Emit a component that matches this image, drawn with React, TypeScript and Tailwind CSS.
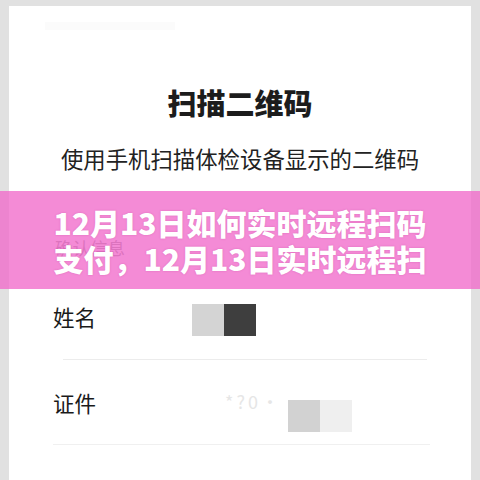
const cjk = { fontFamily: '"Noto Sans CJK SC", "Noto Sans", sans-serif' };

const App = () => {
  return (
    <div className="relative h-[480px] w-[480px] overflow-hidden bg-[#e1e1e1] px-[9px] pt-[6px]" style={cjk}>
      {/* Card */}
      <div className="flex h-full flex-col bg-white">
        <div className="ml-[36px] mt-[16px] h-[8px] w-[130px] bg-[#fbfbfb]" />
        <h1 className="mt-[52px] h-[40px] text-center text-[29px] font-black leading-[40px] text-[#1c1c1c]">
          扫描二维码
        </h1>
        <p className="mt-[21px] h-[30px] text-center text-[22.4px] leading-[30px] text-[#222]">
          使用手机扫描体检设备显示的二维码
        </p>
        <p className="ml-[46px] mt-[63px] h-[24px] text-[17.5px] leading-[24px] text-[#a0a0a0]">确认信息</p>

        {/* Row: name */}
        <div className="mt-[44px] flex h-[32px] items-start">
          <span className="ml-[44px] w-[139px] text-[21.5px] leading-[26px] text-[#1a1a1a]">姓名</span>
          <div className="flex">
            <div className="h-[32px] w-[32px] bg-[#d4d4d4]" />
            <div className="h-[32px] w-[32px] bg-[#3e3e3e]" />
          </div>
        </div>
        <div className="ml-[54px] mr-[44px] mt-[23px] h-px bg-[#ececec]" />

        {/* Row: ID */}
        <div className="mt-[30px] flex items-start">
          <span className="ml-[44px] w-[139px] text-[21.5px] leading-[26px] text-[#1a1a1a]">证件</span>
          <span className="ml-[33px] w-[63px] text-[18px] leading-[22px] tracking-[3px] text-[#e6e6e6]">
            *?0·
          </span>
          <div className="mt-[10px] flex">
            <div className="h-[32px] w-[32px] bg-[#d2d2d2]" />
            <div className="h-[32px] w-[32px] bg-[#efefef]" />
          </div>
        </div>
        <div className="ml-[44px] mr-[41px] mt-[12px] h-px bg-[#f0f0f0]" />
      </div>

      {/* Pink title overlay */}
      <div className="absolute left-0 right-0 top-[191px] flex h-[98px] flex-col items-center justify-center bg-[rgba(240,100,200,0.75)]">
        <span className="whitespace-nowrap text-[30px] font-black leading-[36px] text-white [text-shadow:0_0_2px_rgba(190,60,150,0.45)]">
          12月13日如何实时远程扫码
        </span>
        <span className="whitespace-nowrap text-[30px] font-black leading-[36px] text-white [text-shadow:0_0_2px_rgba(190,60,150,0.45)]">
          支付，12月13日实时远程扫
        </span>
      </div>
    </div>
  );
};

export default App;
